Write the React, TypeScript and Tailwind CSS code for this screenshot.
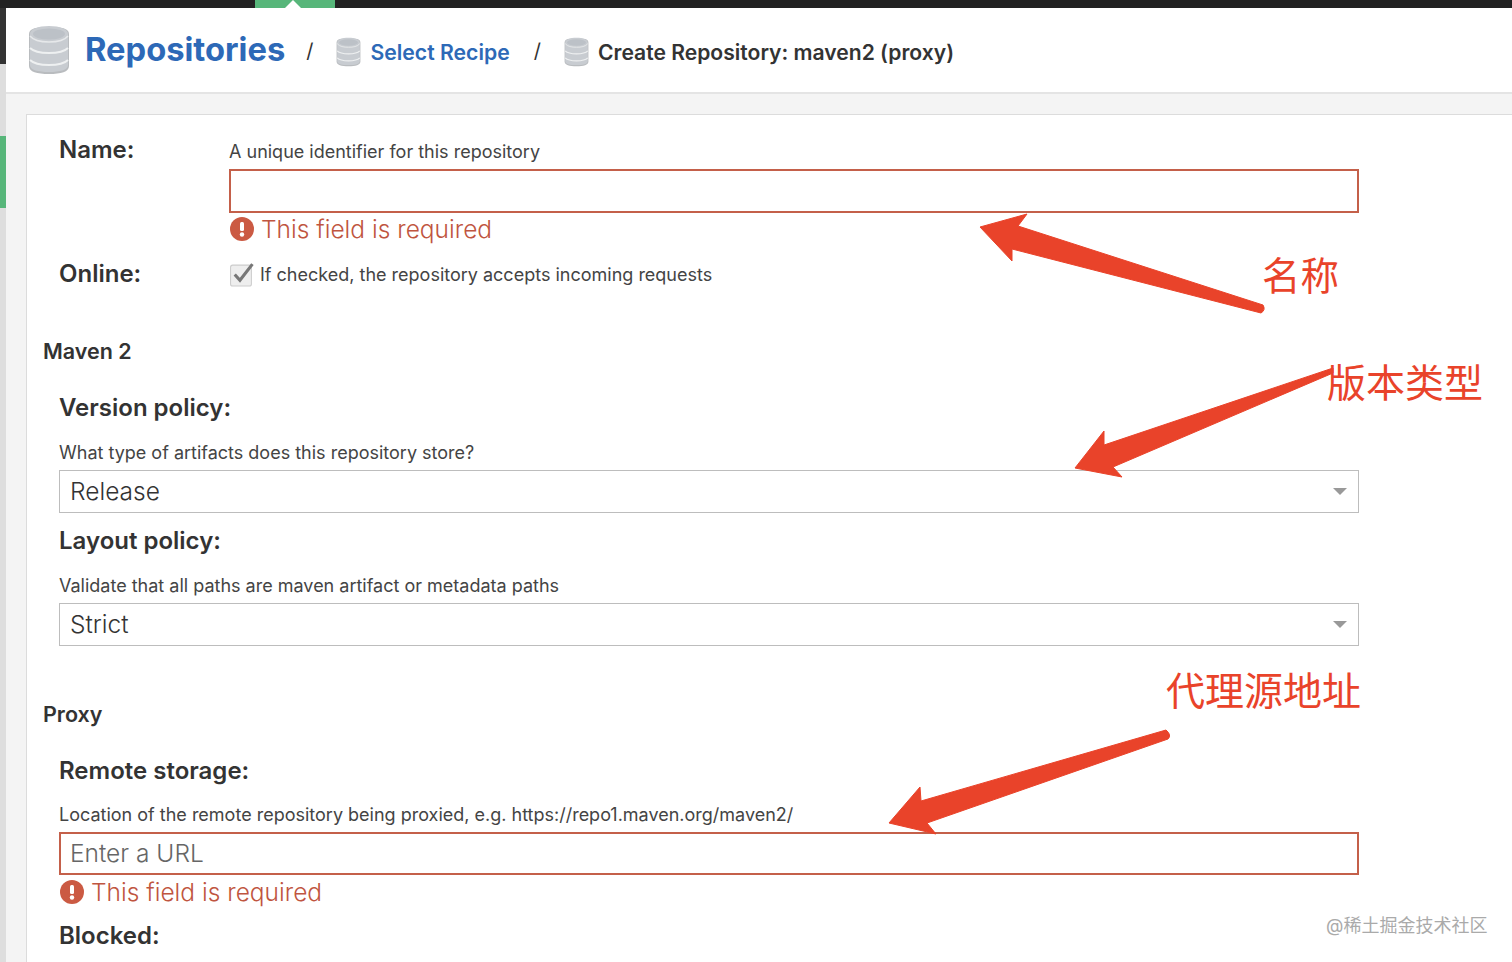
import type { ReactNode } from 'react';

function DbIcon({ size }: { size: 'lg' | 'sm' }) {
  return (
    <svg
      viewBox="0 0 42 50"
      className={size === 'lg' ? 'w-[42px] h-[50px] shrink-0' : 'w-[25px] h-[30px] shrink-0'}
    >
      <path d="M1 9C1 3 9 2 21 2s20 1 20 7v32c0 6-8 8-20 8S1 47 1 41z" fill="#b9bcbf" />
      <path d="M2 9C2 4 10 1 21 1s19 3 19 8v31c0 5-8 7-19 7S2 45 2 40z" fill="#c8ccd1" />
      <ellipse cx="21" cy="9" rx="16" ry="5.500" fill="#bcc1c7" />
      <path d="M2 11c4 5 11 6 19 6s15-1 19-6" fill="none" stroke="#e6e8ea" strokeWidth="1.500" />
      <path d="M2 23c4 4 11 5 19 5s15-1 19-5" fill="none" stroke="#eef0f1" strokeWidth="2" />
      <path d="M2 35c4 4 11 5 19 5s15-1 19-5" fill="none" stroke="#eef0f1" strokeWidth="2" />
    </svg>
  );
}

function ErrorLine({ children }: { children: ReactNode }) {
  return (
    <div className="flex items-center gap-[7px] pl-[1px] h-[32px] text-[24.5px] text-[#bf5540] font-light">
      <svg viewBox="0 0 24 24" className="w-[24px] h-[24px] shrink-0">
        <circle cx="12" cy="12" r="12" fill="#cb5a43" />
        <rect x="10" y="5" width="4" height="9" rx="1.500" fill="#fff" />
        <circle cx="12" cy="17.500" r="2.200" fill="#fff" />
      </svg>
      {children}
    </div>
  );
}

function Label({ children }: { children: ReactNode }) {
  return <div className="text-[24px] leading-[30px] font-semibold text-[#333]">{children}</div>;
}

function Help({ children }: { children: ReactNode }) {
  return <div className="text-[18px] leading-[24px] text-[#444]">{children}</div>;
}

function SelectBox({ value }: { value: string }) {
  return (
    <div className="flex items-center justify-between w-[1300px] h-[43px] border border-[#bdbdbd] pl-[10px] pr-[11px] text-[24.5px] font-light text-[#333]">
      {value}
      <div className="w-0 h-0 border-x-[7px] border-x-transparent border-t-[7px] border-t-[#999]" />
    </div>
  );
}

export default function App() {
  return (
    <div
      className="relative w-[1512px] h-[962px] overflow-hidden bg-[#f4f4f4]"
      style={{ fontFamily: '"Inter", "Noto Sans CJK SC", sans-serif' }}
    >
      {/* top bar */}
      <div className="flex h-[8px] bg-[#222]">
        <div className="relative ml-[255px] w-[80px] bg-[#57b67a]">
          <div className="absolute left-[30px] top-0 w-0 h-0 border-x-[8px] border-x-transparent border-b-[8px] border-b-white" />
        </div>
      </div>

      <div className="flex h-[954px]">
        {/* left rail */}
        <div className="w-[6px] shrink-0 flex flex-col bg-[#dedede]">
          <div className="h-[56px] bg-[#333]" />
          <div className="mt-[72px] h-[72px] bg-[#57b67a]" />
        </div>

        <div className="flex-1 min-w-0">
          {/* breadcrumb header */}
          <div className="flex items-center h-[86px] bg-white border-b-2 border-[#e4e4e4] pl-[22px]">
            <DbIcon size="lg" />
            <div className="ml-[15px] text-[32.7px] font-bold text-[#2d69b7]">Repositories</div>
            <div className="ml-[21px] mt-[2px] text-[20px] text-[#333]">/</div>
            <div className="ml-[23px] mt-[3px]">
              <DbIcon size="sm" />
            </div>
            <div className="ml-[9px] mt-[6px] text-[21.2px] font-semibold text-[#2d69b7]">Select Recipe</div>
            <div className="ml-[24px] mt-[2px] text-[20px] text-[#333]">/</div>
            <div className="ml-[23px] mt-[3px]">
              <DbIcon size="sm" />
            </div>
            <div className="ml-[9px] mt-[6px] text-[21.1px] font-semibold text-[#333]">Create Repository: maven2 (proxy)</div>
          </div>

          {/* form panel */}
          <div className="ml-[20px] mt-[20px] h-[900px] bg-white border-l border-t border-[#dcdcdc] pl-[32px]">
            <div className="flex pt-[20px]">
              <div className="w-[170px]">
                <Label>Name:</Label>
              </div>
              <div>
                <div className="pt-[5px]">
                  <Help>A unique identifier for this repository</Help>
                </div>
                <div className="w-[1130px] h-[44px] mt-[5px] border-2 border-[#c4604a]" />
                <ErrorLine>This field is required</ErrorLine>
              </div>
            </div>
            <div className="flex mt-[14px] items-start">
              <div className="w-[170px]">
                <Label>Online:</Label>
              </div>
              <div className="flex items-center gap-[6px] mt-[3px]">
                <svg viewBox="0 0 24 24" className="w-[25px] h-[25px]">
                  <rect x="1.500" y="3" width="20" height="20" rx="2" fill="#eee" stroke="#ccc" />
                  <path d="M5.500 12l5 5.500L22.500 2" fill="none" stroke="#777" strokeWidth="3" />
                </svg>
                <Help>If checked, the repository accepts incoming requests</Help>
              </div>
            </div>

            <div className="-ml-[16px] mt-[48px] text-[21.5px] leading-[28px] font-semibold text-[#333]">Maven 2</div>

            <div className="mt-[28px]">
              <Label>Version policy:</Label>
            </div>
            <div className="mt-[18px] mb-[5px]">
              <Help>What type of artifacts does this repository store?</Help>
            </div>
            <SelectBox value="Release" />

            <div className="mt-[13px]">
              <Label>Layout policy:</Label>
            </div>
            <div className="mt-[18px] mb-[5px]">
              <Help>Validate that all paths are maven artifact or metadata paths</Help>
            </div>
            <SelectBox value="Strict" />

            <div className="-ml-[16px] mt-[54px] text-[21.5px] leading-[28px] font-semibold text-[#333]">Proxy</div>

            <div className="mt-[28px]">
              <Label>Remote storage:</Label>
            </div>
            <div className="mt-[17px] mb-[5px]">
              <Help>Location of the remote repository being proxied, e.g. https://repo1.maven.org/maven2/</Help>
            </div>
            <div className="flex items-center w-[1300px] h-[43px] border-2 border-[#c4604a] pl-[9px] mb-[1px] text-[24.5px] font-light text-[#666]">
              Enter a URL
            </div>
            <ErrorLine>This field is required</ErrorLine>
            <div className="mt-[13px]">
              <Label>Blocked:</Label>
            </div>
          </div>
        </div>
      </div>

      {/* hand-drawn annotations over the page */}
      <svg viewBox="0 0 1512 962" className="absolute inset-0 w-[1512px] h-[962px] pointer-events-none">
        <g fill="#e9432a" stroke="#e9432a" strokeWidth="1" strokeLinejoin="round">
          <path d="M980 227L1027 214L1018 226L1263 305Q1266 310 1261 313L1012 249L1012 261Z" />
          <path d="M1075 468L1104 431L1104 445L1333 368L1333 373L1113 467L1122 477Z" />
          <path d="M889 823L920 787L921 801L1166 730Q1172 735 1168 739L927 823L936 834Z" />
        </g>
      </svg>
      <div className="absolute left-[1262px] top-[249px] text-[38.500px] leading-[54px] font-normal text-[#e9432a]">名称</div>
      <div className="absolute left-[1327px] top-[356px] text-[39px] leading-[54px] font-normal text-[#e9432a]">版本类型</div>
      <div className="absolute left-[1166px] top-[664px] text-[39px] leading-[54px] font-normal text-[#e9432a]">代理源地址</div>
      <div className="absolute left-[1326px] top-[914px] text-[18px] leading-[24px] text-[#aaa]">@稀土掘金技术社区</div>
    </div>
  );
}
